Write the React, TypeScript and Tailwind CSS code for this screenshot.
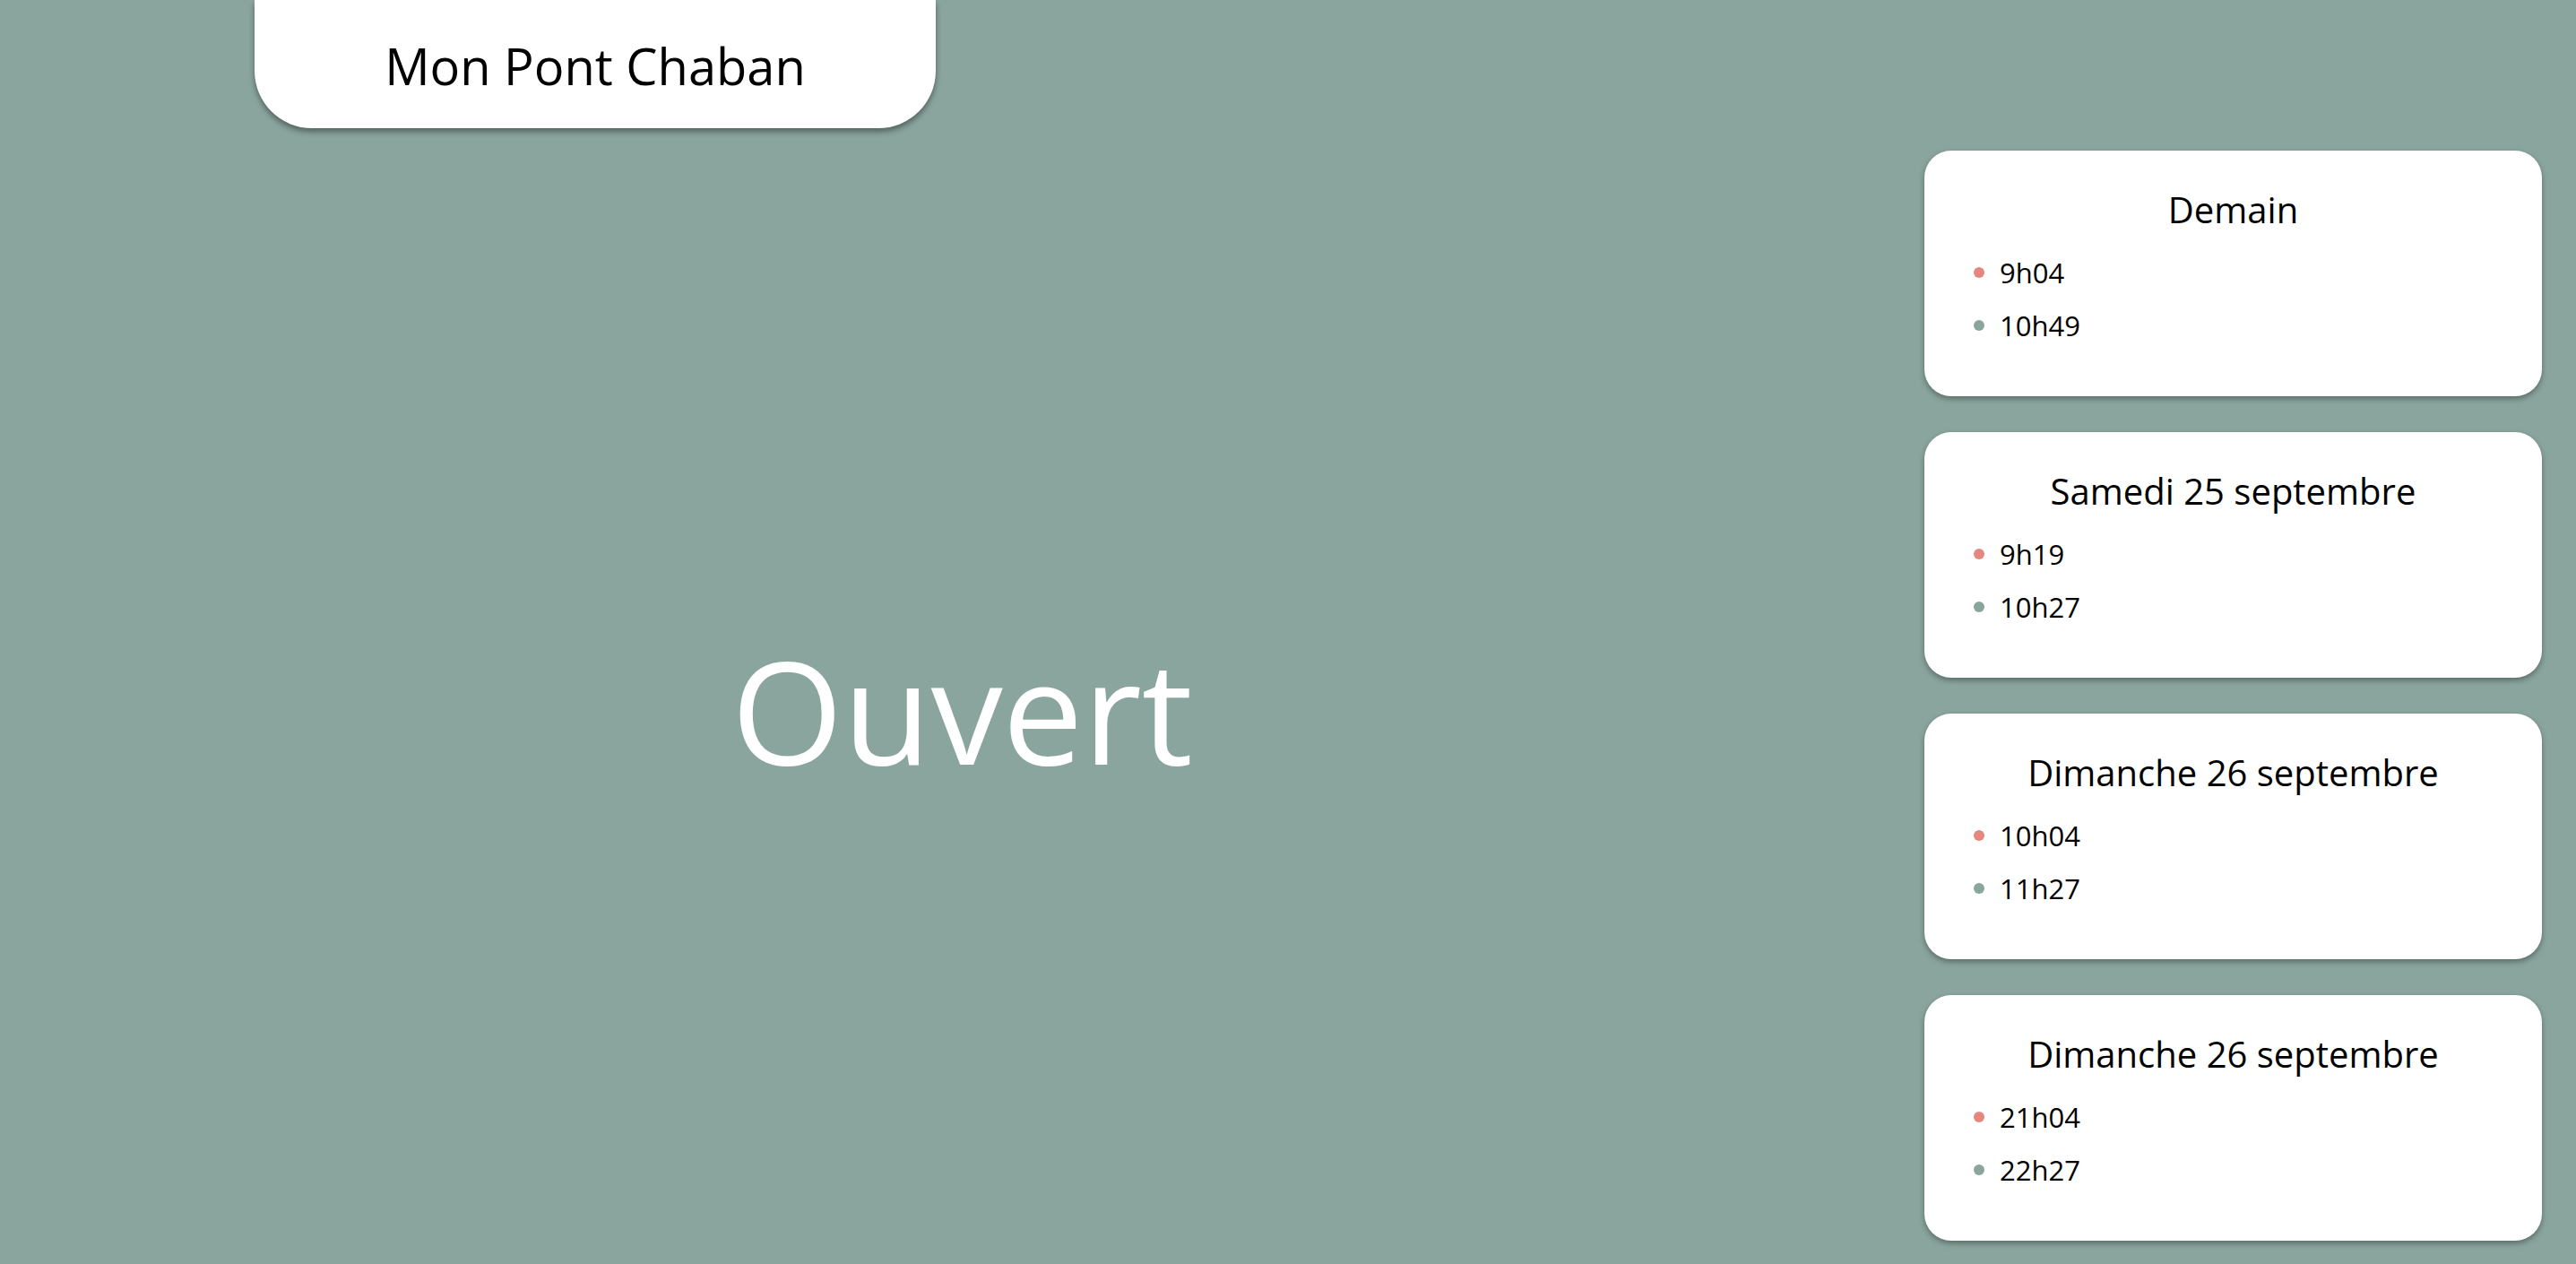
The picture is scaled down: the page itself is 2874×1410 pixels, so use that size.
const days = [
  { label: "Demain", closing: "9h04", opening: "10h49" },
  { label: "Samedi 25 septembre", closing: "9h19", opening: "10h27" },
  { label: "Dimanche 26 septembre", closing: "10h04", opening: "11h27" },
  { label: "Dimanche 26 septembre", closing: "21h04", opening: "22h27" },
];

const DayCard = ({ label, closing, opening }: { label: string; closing: string; opening: string }) => {
  return (
    <div className="h-[274px] rounded-[30px] bg-white pt-[39px] shadow-[0_3px_6px_rgba(0,0,0,0.35)]">
      <h3 className="text-center text-[40px] leading-[54px] font-normal text-black">{label}</h3>
      <ul className="mt-[22px] flex flex-col gap-[17px] pl-[55px]">
        <li className="flex items-center gap-[17px] text-[31px] leading-[42px] text-black">
          <span className="h-[12px] w-[12px] rounded-full bg-[#e5877f]" />
          {closing}
        </li>
        <li className="flex items-center gap-[17px] text-[31px] leading-[42px] text-black">
          <span className="h-[12px] w-[12px] rounded-full bg-[#8aa59d]" />
          {opening}
        </li>
      </ul>
    </div>
  );
};

const App = () => {
  return (
    <div
      className="flex h-[1410px] w-full overflow-hidden bg-[#8aa59d]"
      style={{ fontFamily: '"Open Sans", "Noto Sans", sans-serif' }}
    >
      {/* Left: title + status */}
      <div className="flex flex-1 flex-col">
        <header className="ml-[284px] flex h-[143px] w-[760px] items-end justify-center rounded-b-[64px] bg-white pb-[32px] shadow-[0_4px_6px_rgba(0,0,0,0.4)]">
          <h1 className="text-[56px] leading-[76px] font-normal text-black">Mon Pont Chaban</h1>
        </header>
        <main className="flex flex-1 items-center justify-center pt-[28px]">
          <p className="text-[160px] leading-[218px] text-white">Ouvert</p>
        </main>
      </div>

      {/* Right: upcoming closures */}
      <aside className="mr-[38px] flex w-[689px] flex-col gap-[40px] pt-[168px]">
        {days.map((d, i) => (
          <DayCard key={i} {...d} />
        ))}
      </aside>
    </div>
  );
};

export default App;
